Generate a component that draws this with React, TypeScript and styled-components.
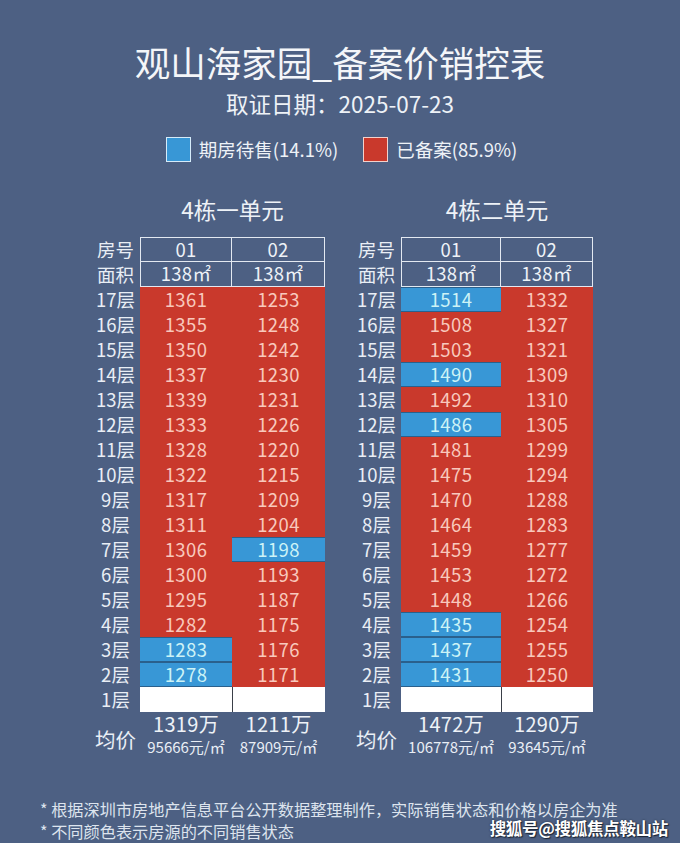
import React from "react";
import styled, { createGlobalStyle } from "styled-components";

const GlobalStyle = createGlobalStyle`
	html, body {
		margin: 0;
		padding: 0;
		background: #4d6083;
	}
	* {
		box-sizing: border-box;
	}
`;

const RED = "#c9392c";
const BLUE = "#3897d6";
const FONT = `"Noto Sans CJK SC", "Noto Sans", "DejaVu Sans", sans-serif`;

const Page = styled.div`
	position: relative;
	width: 680px;
	height: 843px;
	overflow: hidden;
	background: #4d6083;
	font-family: ${FONT};
	color: #eef2f7;
	display: flex;
	flex-direction: column;
	align-items: center;
	padding-top: 41px;
`;

const Title = styled.h1`
	margin: 0;
	font-size: 35.5px;
	line-height: 42px;
	font-weight: 400;
	color: #f4f6f9;
`;

const DateLine = styled.div`
	margin-top: 6px;
	font-size: 22.5px;
	line-height: 28px;
	color: #eef2f7;
`;

const Legend = styled.div`
	margin-top: 19px;
	display: flex;
	align-items: center;
	gap: 25px;
	height: 26px;
	margin-left: 3px;
`;

const LegendItem = styled.div`
	display: flex;
	align-items: center;
	gap: 8px;
	font-size: 18.5px;
	line-height: 26px;
`;

const Swatch = styled.span<{ $fill: string; $edge: string }>`
	display: inline-block;
	width: 25px;
	height: 25px;
	background: ${({ $fill }) => $fill};
	border: 1px solid ${({ $edge }) => $edge};
`;

const Tables = styled.div`
	margin-top: 33px;
	display: flex;
	gap: 24px;
	margin-left: 1px;
`;

const Block = styled.div`
	display: flex;
	flex-direction: column;
`;

const Heading = styled.div`
	padding-left: 52px;
	text-align: center;
	font-size: 22.5px;
	line-height: 28px;
	margin-bottom: 14px;
	color: #eef2f7;
`;

const Grid = styled.div<{ $c1: number; $c2: number }>`
	display: grid;
	grid-template-columns: 52px ${({ $c1 }) => $c1}px ${({ $c2 }) => $c2}px;
`;

const Label = styled.div`
	height: 25px;
	line-height: 25px;
	text-align: center;
	font-size: 18.5px;
	color: #e9eef5;
	white-space: nowrap;
	padding-left: 3px;
`;

const HeadCell = styled.div<{ $left?: boolean; $top?: boolean }>`
	height: 25px;
	line-height: 23px;
	text-align: center;
	font-size: 18.5px;
	color: #eef2f7;
	letter-spacing: 0.3px;
	border-right: 1px solid #e3e9f1;
	border-bottom: 1px solid #e3e9f1;
	border-left: ${({ $left }) => ($left ? "1px solid #e3e9f1" : "none")};
	border-top: ${({ $top }) => ($top ? "1px solid #e3e9f1" : "none")};
`;

const Cell = styled.div<{ $sale?: boolean }>`
	height: 25px;
	line-height: 25px;
	text-align: center;
	font-size: 18.5px;
	letter-spacing: 0.4px;
	background: ${({ $sale }) => ($sale ? BLUE : RED)};
	color: ${({ $sale }) => ($sale ? "#cdf3f6" : "#f8c9bd")};
	box-shadow: ${({ $sale }) =>
		$sale ? `inset 0 1px 0 #2a608c, inset 0 -1px 0 #2a608c` : "none"};
`;

const EmptyCell = styled.div<{ $split?: boolean }>`
	height: 25px;
	background: #ffffff;
	border-left: ${({ $split }) => ($split ? "1px solid #3a3f48" : "none")};
`;

const AvgLabel = styled.div`
	padding-top: 13px;
	padding-left: 3px;
	text-align: center;
	font-size: 20.5px;
	line-height: 28px;
	color: #e9eef5;
`;

const Avg = styled.div`
	display: flex;
	flex-direction: column;
	align-items: center;
	white-space: nowrap;
`;

const AvgTotal = styled.span`
	margin-top: 1px;
	font-size: 20px;
	line-height: 22px;
	color: #eef2f7;
	letter-spacing: 0.3px;
`;

const AvgUnit = styled.span`
	margin-top: 3px;
	font-size: 15px;
	line-height: 18px;
	color: #e9eef5;
`;

const Footer = styled.div`
	align-self: stretch;
	margin-top: 42px;
	padding-left: 40px;
	font-size: 16.2px;
	line-height: 22px;
	color: #dde4ee;
`;

const Watermark = styled.div`
	position: absolute;
	right: 12px;
	bottom: 5px;
	font-family: ${FONT};
	font-weight: 700;
	font-size: 16.5px;
	line-height: 20px;
	color: #ffffff;
	text-shadow: 0 0 2px #1c2535, 1px 1px 1px #1c2535;
	letter-spacing: -0.3px;
`;

type Unit = {
	name: string;
	widths: [number, number];
	cols: [string[], string[]];
	avg: [[string, string], [string, string]];
};

// "*" marks a unit still for sale (blue)
const units: Unit[] = [
	{
		name: "4栋一单元",
		widths: [92, 93],
		cols: [
			["1361", "1355", "1350", "1337", "1339", "1333", "1328", "1322", "1317", "1311", "1306", "1300", "1295", "1282", "1283*", "1278*"],
			["1253", "1248", "1242", "1230", "1231", "1226", "1220", "1215", "1209", "1204", "1198*", "1193", "1187", "1175", "1176", "1171"],
		],
		avg: [
			["1319万", "95666元/㎡"],
			["1211万", "87909元/㎡"],
		],
	},
	{
		name: "4栋二单元",
		widths: [100, 92],
		cols: [
			["1514*", "1508", "1503", "1490*", "1492", "1486*", "1481", "1475", "1470", "1464", "1459", "1453", "1448", "1435*", "1437*", "1431*"],
			["1332", "1327", "1321", "1309", "1310", "1305", "1299", "1294", "1288", "1283", "1277", "1272", "1266", "1254", "1255", "1250"],
		],
		avg: [
			["1472万", "106778元/㎡"],
			["1290万", "93645元/㎡"],
		],
	},
];

const floors = Array.from({ length: 16 }, (_, i) => 17 - i);

const PriceCell = ({ value }: { value: string }) => {
	const sale = value.endsWith("*");
	return <Cell $sale={sale}>{sale ? value.slice(0, -1) : value}</Cell>;
};

const UnitTable = ({ unit }: { unit: Unit }) => (
	<Block>
		<Heading>{unit.name}</Heading>
		<Grid $c1={unit.widths[0]} $c2={unit.widths[1]}>
			<Label>房号</Label>
			<HeadCell $left $top>01</HeadCell>
			<HeadCell $top>02</HeadCell>
			<Label>面积</Label>
			<HeadCell $left>138㎡</HeadCell>
			<HeadCell>138㎡</HeadCell>
			{floors.map((f, i) => (
				<React.Fragment key={f}>
					<Label>{f}层</Label>
					<PriceCell value={unit.cols[0][i]} />
					<PriceCell value={unit.cols[1][i]} />
				</React.Fragment>
			))}
			<Label>1层</Label>
			<EmptyCell />
			<EmptyCell $split />
			<AvgLabel>均价</AvgLabel>
			{unit.avg.map(([total, unitPrice]) => (
				<Avg key={total}>
					<AvgTotal>{total}</AvgTotal>
					<AvgUnit>{unitPrice}</AvgUnit>
				</Avg>
			))}
		</Grid>
	</Block>
);

const App = () => (
	<Page>
		<GlobalStyle />
		<Title>观山海家园_备案价销控表</Title>
		<DateLine>取证日期：2025-07-23</DateLine>
		<Legend>
			<LegendItem>
				<Swatch $fill={BLUE} $edge="#d6ecfa" />
				期房待售(14.1%)
			</LegendItem>
			<LegendItem>
				<Swatch $fill={RED} $edge="#f3d2cc" />
				已备案(85.9%)
			</LegendItem>
		</Legend>
		<Tables>
			{units.map((u) => (
				<UnitTable key={u.name} unit={u} />
			))}
		</Tables>
		<Footer>
			<div>* 根据深圳市房地产信息平台公开数据整理制作，实际销售状态和价格以房企为准</div>
			<div>* 不同颜色表示房源的不同销售状态</div>
		</Footer>
		<Watermark>搜狐号@搜狐焦点鞍山站</Watermark>
	</Page>
);

export default App;
